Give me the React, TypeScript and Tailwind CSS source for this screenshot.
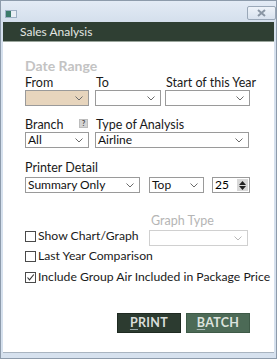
import React from "react";

const font = { fontFamily: 'Lato, "Noto Sans", sans-serif' };

function Chevron({ color = "#6b6b6b" }: { color?: string }) {
  return (
    <svg width="8" height="5" viewBox="0 0 8 5" className="shrink-0">
      <path d="M0.5 0.5 L4 4 L7.5 0.5" fill="none" stroke={color} strokeWidth="1" />
    </svg>
  );
}

function Select({
  w,
  text,
  bg = "bg-white",
  disabled = false,
}: {
  w: string;
  text?: string;
  bg?: string;
  disabled?: boolean;
}) {
  return (
    <div
      className={`${w} h-[16px] ${bg} border ${disabled ? "border-[#d0d0d0]" : "border-[#9a9a9a]"} flex items-center justify-between pl-[2px] pr-[5px] text-[12px] leading-none text-[#111] whitespace-nowrap`}
    >
      <span>{text ?? ""}</span>
      <Chevron color={disabled ? "#b8b8b8" : "#6b6b6b"} />
    </div>
  );
}

function Check({ checked = false, label }: { checked?: boolean; label: string }) {
  return (
    <div className="flex items-center h-[20px] whitespace-nowrap">
      <div className="w-[11px] h-[11px] shrink-0 border border-[#4a4a4a] bg-white flex items-center justify-center">
        {checked && (
          <svg width="9" height="9" viewBox="0 0 9 9">
            <path d="M1.5 4.5 L3.5 6.8 L7.8 1.5" fill="none" stroke="#333" strokeWidth="1.1" />
          </svg>
        )}
      </div>
      <span className="ml-[2px] text-[12.2px] leading-none text-[#1a1a1a]">{label}</span>
    </div>
  );
}

const label = "text-[12.5px] leading-[12px] h-[13px] text-[#1a1a1a] whitespace-nowrap";

export default function App() {
  return (
    <div
      className="w-[277px] h-[359px] flex flex-col bg-[#d6e1ee] border border-[#8d9bab] overflow-hidden"
      style={font}
    >
      {/* title bar */}
      <div className="h-[21px] flex items-center justify-between bg-gradient-to-b from-[#e3ebf5] to-[#d4dfec] pl-[4px]">
        <div className="w-[12px] h-[8px] flex mt-[4px] border border-[#9db0c4]">
          <div className="w-[6px] h-full bg-[#3b7a6a]" />
          <div className="w-[5px] h-full bg-[#e8eef5]" />
        </div>
        <div className="w-[29px] h-[14px] mt-[2px] rounded-[2px] border border-[#9aa8b8] bg-gradient-to-b from-[#eef3f9] to-[#d8e2ee] flex items-center justify-center">
          <svg width="9" height="8" viewBox="0 0 9 8">
            <path d="M1 1 L8 7 M8 1 L1 7" stroke="#8a96a4" strokeWidth="2" />
          </svg>
        </div>
      </div>
      {/* green header */}
      <div className="mx-[2px] h-[20px] bg-[#2f3f33] flex items-center pl-[17px] border-b border-[#9aa59c]">
        <span className="text-[12px] text-[#e2e6e2] leading-none">Sales Analysis</span>
      </div>
      {/* content */}
      <div className="mx-[2px] flex-1 bg-white border-b border-[#a9b4c0] pl-[22px] flex flex-col mb-[5px]">
        <div className="mt-[15px] text-[14px] font-bold text-[#c3c3c3] leading-[18px]">Date Range</div>

        <div className="flex mt-[2px]">
          <div className="w-[64px]">
            <div className={label}>From</div>
            <Select w="w-[64px]" bg="bg-[#e7d5bd]" />
          </div>
          <div className="w-[66px] ml-[6px]">
            <div className={label + " pl-[1px]"}>To</div>
            <Select w="w-[66px]" />
          </div>
          <div className="w-[85px] ml-[4px]">
            <div className={label + " pl-[1px]"}>Start of this Year</div>
            <Select w="w-[85px]" />
          </div>
        </div>

        <div className="flex mt-[13px]">
          <div className="w-[64px]">
            <div className="h-[13px] flex items-start justify-between">
              <span className="text-[12.5px] leading-[12px] text-[#1a1a1a]">Branch</span>
              <span className="w-[9px] h-[9px] mr-[1px] bg-[#d4d4d4] border border-[#bdbdbd] text-[7px] leading-[7px] text-[#444] font-bold flex items-center justify-center">?</span>
            </div>
            <Select w="w-[64px]" text="All" />
          </div>
          <div className="w-[153px] ml-[6px]">
            <div className={label + " pl-[1px]"}>Type of Analysis</div>
            <Select w="w-[154px]" text="Airline" />
          </div>
        </div>

        <div className="mt-[14px] text-[12.5px] leading-[12px] h-[15px] text-[#1a1a1a] whitespace-nowrap">Printer Detail</div>
        <div className="flex">
          <Select w="w-[115px]" text="Summary Only" />
          <div className="ml-[9px]">
            <Select w="w-[55px]" text="Top" />
          </div>
          <div className="ml-[8px] w-[38px] h-[16px] border border-[#9a9a9a] flex items-center justify-between pl-[2px] pr-[1px] text-[12px] leading-none">
            <span>25</span>
            <div className="w-[11px] h-[12px] bg-[#d8d8d8] flex flex-col items-center justify-center gap-[1px]">
              <svg width="7" height="4" viewBox="0 0 7 4"><path d="M0 4 L3.5 0 L7 4 Z" fill="#222" /></svg>
              <svg width="7" height="4" viewBox="0 0 7 4"><path d="M0 0 L3.5 4 L7 0 Z" fill="#222" /></svg>
            </div>
          </div>
        </div>

        <div className="flex mt-[22px]">
          <div className="flex flex-col w-[124px] pt-[11px]">
            <Check label="Show Chart/Graph" />
            <Check label="Last Year Comparison" />
          </div>
          <div className="flex flex-col">
            <div className="text-[12.5px] leading-[12px] h-[15px] text-[#b5b5b5] pl-[2px] whitespace-nowrap">Graph Type</div>
            <Select w="w-[99px]" disabled />
          </div>
        </div>
        <div className="mt-[1px]">
          <Check checked label="Include Group Air Included in Package Price" />
        </div>

        <div className="flex mt-[26px] ml-[92px] gap-[5px]">
          <div className="w-[64px] h-[20px] bg-[#2c3b30] border border-[#1f2a22] flex items-center justify-center text-[12.5px] font-bold text-[#d9ddd9] tracking-[0.3px]">
            <span><span className="underline decoration-[#9aa] underline-offset-2">P</span>RINT</span>
          </div>
          <div className="w-[64px] h-[20px] bg-[#4c6a56] border border-[#3e5a47] flex items-center justify-center text-[12.5px] font-bold text-[#dde3dd] tracking-[0.3px]">
            <span><span className="underline decoration-[#abb] underline-offset-2">B</span>ATCH</span>
          </div>
        </div>
      </div>
    </div>
  );
}
